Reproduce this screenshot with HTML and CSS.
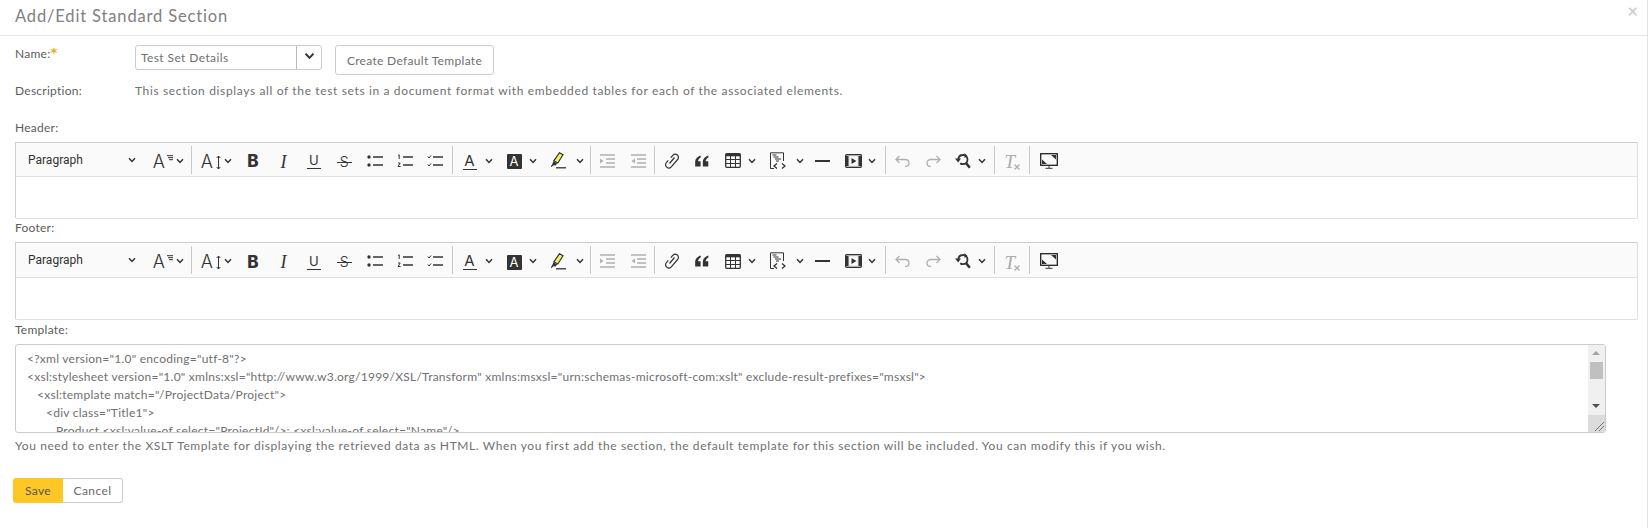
FILE: index.html
```html
<!DOCTYPE html>
<html lang="en">
<head>
<meta charset="utf-8">
<title>Add/Edit Standard Section</title>
<link rel="stylesheet" href="styles.css">
</head>
<body>
<svg class="defs" width="0" height="0" aria-hidden="true">
  <symbol id="i-chev" viewBox="0 0 8 6"><path class="st" d="M1 1.200 4 4.400 7 1.200"/></symbol>
  <symbol id="i-lines" viewBox="0 0 6 6"><path class="st1" d="M0 .7h6M1 2.700h5M2 4.700h4"/></symbol>
  <symbol id="i-updown" viewBox="0 0 5 15"><path class="st1" d="M2.500 1v13M.7 3 2.500 1 4.300 3M.7 12 2.500 14 4.300 12"/></symbol>
  <symbol id="i-ul" viewBox="0 0 16 16"><circle class="fl" cx="2" cy="4" r="1.700"/><circle class="fl" cx="2" cy="12" r="1.700"/><path class="st15" d="M6 4h10M6 12h10"/></symbol>
  <symbol id="i-ol" viewBox="0 0 16 16"><path class="st1" d="M1 2.500 2.200 1.800V6M1 10h2.200L1 13.500h2.600"/><path class="st15" d="M6 4h10M6 12h10"/></symbol>
  <symbol id="i-todo" viewBox="0 0 16 16"><path class="st1" d="M.8 3.500 2 5 4 2.500M.8 11.500 2 13 4 10.500"/><path class="st15" d="M6 4h10M6 12h10"/></symbol>
  <symbol id="i-mark" viewBox="0 0 16 17"><path d="M9.500 .7 13 2.800 7.800 11 3.800 8.800Z" fill="#f7ef6a" stroke="#333" stroke-width="1.200"/><path class="fl" d="M3.400 9.300 7.200 11.500 5.500 13.500 3.500 13.200 1.500 15 .7 14.500 2.200 12.300Z"/><path class="st15" d="M6 15.800h10"/></symbol>
  <symbol id="i-ind" viewBox="0 0 16 16"><path class="gr" d="M1 2h15M7 6h9M7 10h9M1 14h15"/><path class="grf" d="M1 5.500 4.500 8 1 10.500Z"/></symbol>
  <symbol id="i-out" viewBox="0 0 16 16"><path class="gr" d="M1 2h15M7 6h9M7 10h9M1 14h15"/><path class="grf" d="M5 5.500 1.500 8 5 10.500Z"/></symbol>
  <symbol id="i-link" viewBox="0 0 16 16"><path class="st12" d="M5.500 10.500 10.500 4.500M6.800 4.600 8.800 2.300C10 1 12 .9 13.300 2 14.700 3.200 14.800 5.200 13.600 6.500L7.300 13.800C6 15.200 4 15.300 2.700 14.100 1.300 12.900 1.200 10.900 2.400 9.600L4.300 7.400"/></symbol>
  <symbol id="i-quote" viewBox="0 0 15 12"><path class="fl" d="M5.800 0C3 1 .5 3 .2 6.400V12H6V6.200H3.200C3.400 4.400 4.600 3 6.400 2ZM14 0C11.200 1 8.700 3 8.400 6.400V12H14.200V6.200H11.400C11.600 4.400 12.800 3 14.600 2Z"/></symbol>
  <symbol id="i-table" viewBox="0 0 16 15"><rect x=".7" y=".7" width="14.600" height="13.600" rx="1" fill="none" stroke="#333" stroke-width="1.300"/><rect class="fl" x=".7" y=".7" width="14.600" height="2.600"/><path class="st1" d="M5.500 3v11M10.500 3v11M1 6.500h14M1 10.500h14"/></symbol>
  <symbol id="i-src" viewBox="0 0 17 18"><path class="st1" d="M5 16.500H1.500V.8h13V9"/><path class="st1" d="M3.500 3h4M4.500 5h5M6 7h6M7 9h3"/><path class="st15" d="M8 11.500 5 14l3 2.500M13 11.500l3 2.500-3 2.500"/></symbol>
  <symbol id="i-hr" viewBox="0 0 15 4"><path fill="#333" d="M0 1h15v2H0z"/></symbol>
  <symbol id="i-media" viewBox="0 0 17 14"><rect x=".7" y=".7" width="15.600" height="12.600" rx=".8" fill="#ddd" stroke="#333" stroke-width="1.300"/><path fill="#333" d="M0 2h3.500v10H0zM13.500 2H17v10h-3.500z"/><path fill="#fff" d="M4.500 2.500h8v9h-8z"/><path fill="#333" d="M6.500 4 11.500 7 6.500 10Z"/></symbol>
  <symbol id="i-undo" viewBox="0 0 15 12"><path class="gr" d="M4.500 1 1 4.500 4.500 8M1.500 4.500H10C12.500 4.500 14 6 14 8 14 10 12.500 11.500 10 11.500"/></symbol>
  <symbol id="i-redo" viewBox="0 0 15 12"><path class="gr" d="M10.500 1 14 4.500 10.500 8M13.500 4.500H5C2.500 4.500 1 6 1 8 1 10 2.500 11.500 5 11.500"/></symbol>
  <symbol id="i-find" viewBox="0 0 16 16"><path class="st18" d="M3.200 6.500C3.500 3.800 5.500 2 8 2c2.700 0 4.500 2 4.500 4.500 0 2.800-2 4.700-4.500 4.700-1.200 0-2-.3-2.800-1"/><path class="fl" d="M0 5.500h6L3.200 9.500ZM9.500 0l3 3-3 2Z"/><path class="st25" d="M11 10l3.800 4.800"/></symbol>
  <symbol id="i-x" viewBox="0 0 6 6"><path class="gr" d="M.5.500 5.500 5.500M5.500.500.500 5.500"/></symbol>
  <symbol id="i-full" viewBox="0 0 18 16"><rect x=".7" y=".7" width="16.600" height="11.600" fill="none" stroke="#222" stroke-width="1.300"/><path class="fl" d="M2 6.500V11H7ZM16 6.500V2H11Z"/><path class="st1" d="M9 12.500V15M5.500 15.300h7"/></symbol>
</svg>

<main class="modal">
  <header class="modal-head">
    <h1 class="modal-title">Add/Edit Standard Section</h1>
    <span class="modal-close">×</span>
  </header>
  <form class="form">
    <div class="row row-name">
      <span class="label">Name:<b class="req">*</b></span>
      <div class="combo"><span class="combo-text">Test Set Details</span><span class="combo-btn"><svg class="chev-lg"><use href="#i-chev"/></svg></span></div>
      <span class="btn-default">Create Default Template</span>
    </div>
    <div class="row row-desc">
      <span class="label">Description:</span>
      <span class="text">This section displays all of the test sets in a document format with embedded tables for each of the associated elements.</span>
    </div>

    <div class="label label-header">Header:</div>
    <div class="editor">
      <div class="toolbar">
        <span class="tb-para">Paragraph<svg class="chev"><use href="#i-chev"/></svg></span>
        <span class="dd"><span class="g g-a">A<svg class="g-lines"><use href="#i-lines"/></svg></span><svg class="chev"><use href="#i-chev"/></svg></span>
        <i class="sep"></i>
        <span class="dd"><span class="g g-a">A<svg class="g-updown"><use href="#i-updown"/></svg></span><svg class="chev"><use href="#i-chev"/></svg></span>
        <span class="bt"><span class="g g-b">B</span></span>
        <span class="bt"><span class="g g-i">I</span></span>
        <span class="bt"><span class="g g-u">U</span></span>
        <span class="bt"><span class="g g-s">S</span></span>
        <span class="bt"><svg class="ic16"><use href="#i-ul"/></svg></span>
        <span class="bt"><svg class="ic16"><use href="#i-ol"/></svg></span>
        <span class="bt"><svg class="ic16"><use href="#i-todo"/></svg></span>
        <i class="sep"></i>
        <span class="dd"><span class="g g-color">A</span><svg class="chev"><use href="#i-chev"/></svg></span>
        <span class="dd"><span class="g g-bg">A</span><svg class="chev"><use href="#i-chev"/></svg></span>
        <span class="dd dd-wide"><svg class="ic-mark"><use href="#i-mark"/></svg><svg class="chev"><use href="#i-chev"/></svg></span>
        <i class="sep"></i>
        <span class="bt"><svg class="ic16"><use href="#i-ind"/></svg></span>
        <span class="bt"><svg class="ic16"><use href="#i-out"/></svg></span>
        <i class="sep"></i>
        <span class="bt"><svg class="ic16"><use href="#i-link"/></svg></span>
        <span class="bt"><svg class="ic-quote"><use href="#i-quote"/></svg></span>
        <span class="dd"><svg class="ic-table"><use href="#i-table"/></svg><svg class="chev"><use href="#i-chev"/></svg></span>
        <span class="dd dd-wider"><svg class="ic-src"><use href="#i-src"/></svg><svg class="chev"><use href="#i-chev"/></svg></span>
        <span class="bt"><svg class="ic-hr"><use href="#i-hr"/></svg></span>
        <span class="dd dd-media"><svg class="ic-media"><use href="#i-media"/></svg><svg class="chev"><use href="#i-chev"/></svg></span>
        <i class="sep"></i>
        <span class="bt"><svg class="ic-undo"><use href="#i-undo"/></svg></span>
        <span class="bt"><svg class="ic-undo"><use href="#i-redo"/></svg></span>
        <span class="dd"><svg class="ic16"><use href="#i-find"/></svg><svg class="chev"><use href="#i-chev"/></svg></span>
        <i class="sep"></i>
        <span class="bt bt-tx"><span class="g g-t">T<svg class="g-x"><use href="#i-x"/></svg></span></span>
        <i class="sep"></i>
        <span class="bt bt-full"><svg class="ic-full"><use href="#i-full"/></svg></span>
      </div>
      <div class="editable"></div>
    </div>

    <div class="label label-footer">Footer:</div>
    <div class="editor">
      <div class="toolbar toolbar-tall">
        <span class="tb-para">Paragraph<svg class="chev"><use href="#i-chev"/></svg></span>
        <span class="dd"><span class="g g-a">A<svg class="g-lines"><use href="#i-lines"/></svg></span><svg class="chev"><use href="#i-chev"/></svg></span>
        <i class="sep"></i>
        <span class="dd"><span class="g g-a">A<svg class="g-updown"><use href="#i-updown"/></svg></span><svg class="chev"><use href="#i-chev"/></svg></span>
        <span class="bt"><span class="g g-b">B</span></span>
        <span class="bt"><span class="g g-i">I</span></span>
        <span class="bt"><span class="g g-u">U</span></span>
        <span class="bt"><span class="g g-s">S</span></span>
        <span class="bt"><svg class="ic16"><use href="#i-ul"/></svg></span>
        <span class="bt"><svg class="ic16"><use href="#i-ol"/></svg></span>
        <span class="bt"><svg class="ic16"><use href="#i-todo"/></svg></span>
        <i class="sep"></i>
        <span class="dd"><span class="g g-color">A</span><svg class="chev"><use href="#i-chev"/></svg></span>
        <span class="dd"><span class="g g-bg">A</span><svg class="chev"><use href="#i-chev"/></svg></span>
        <span class="dd dd-wide"><svg class="ic-mark"><use href="#i-mark"/></svg><svg class="chev"><use href="#i-chev"/></svg></span>
        <i class="sep"></i>
        <span class="bt"><svg class="ic16"><use href="#i-ind"/></svg></span>
        <span class="bt"><svg class="ic16"><use href="#i-out"/></svg></span>
        <i class="sep"></i>
        <span class="bt"><svg class="ic16"><use href="#i-link"/></svg></span>
        <span class="bt"><svg class="ic-quote"><use href="#i-quote"/></svg></span>
        <span class="dd"><svg class="ic-table"><use href="#i-table"/></svg><svg class="chev"><use href="#i-chev"/></svg></span>
        <span class="dd dd-wider"><svg class="ic-src"><use href="#i-src"/></svg><svg class="chev"><use href="#i-chev"/></svg></span>
        <span class="bt"><svg class="ic-hr"><use href="#i-hr"/></svg></span>
        <span class="dd dd-media"><svg class="ic-media"><use href="#i-media"/></svg><svg class="chev"><use href="#i-chev"/></svg></span>
        <i class="sep"></i>
        <span class="bt"><svg class="ic-undo"><use href="#i-undo"/></svg></span>
        <span class="bt"><svg class="ic-undo"><use href="#i-redo"/></svg></span>
        <span class="dd"><svg class="ic16"><use href="#i-find"/></svg><svg class="chev"><use href="#i-chev"/></svg></span>
        <i class="sep"></i>
        <span class="bt bt-tx"><span class="g g-t">T<svg class="g-x"><use href="#i-x"/></svg></span></span>
        <i class="sep"></i>
        <span class="bt bt-full"><svg class="ic-full"><use href="#i-full"/></svg></span>
      </div>
      <div class="editable"></div>
    </div>

    <div class="label label-template">Template:</div>
    <div class="code">
      <div class="code-lines">
        <div class="code-line">&lt;?xml version="1.0" encoding="utf-8"?&gt;</div>
        <div class="code-line">&lt;xsl:stylesheet version="1.0" xmlns:xsl="http://www.w3.org/1999/XSL/Transform" xmlns:msxsl="urn:schemas-microsoft-com:xslt" exclude-result-prefixes="msxsl"&gt;</div>
        <div class="code-line lvl1">&lt;xsl:template match="/ProjectData/Project"&gt;</div>
        <div class="code-line lvl2">&lt;div class="Title1"&gt;</div>
        <div class="code-line lvl3">Product &lt;xsl:value-of select="ProjectId"/&gt;: &lt;xsl:value-of select="Name"/&gt;</div>
      </div>
      <div class="scroll">
        <span class="arrow-up"></span>
        <span class="thumb"></span>
        <span class="arrow-down"></span>
        <span class="resizer"><svg class="grip" viewBox="0 0 9 9"><path d="M0 9 9 0M4 9 9 4" stroke="#777" fill="none"/></svg></span>
      </div>
    </div>
    <p class="help">You need to enter the XSLT Template for displaying the retrieved data as HTML. When you first add the section, the default template for this section will be included. You can modify this if you wish.</p>
    <div class="actions">
      <span class="btn-save">Save</span><span class="btn-cancel">Cancel</span>
    </div>
  </form>
</main>
</body>
</html>
```
FILE: styles.css
```css
* { box-sizing: border-box; }
html, body { margin: 0; padding: 0; background: #fff; }
body { font-family: Lato, "Open Sans", sans-serif; font-size: 12px; color: #666; overflow: hidden; }
.defs { position: absolute; }
.modal { height: 528px; border-right: 1px solid #e4e4e4; }
.modal-head { height: 36px; border-bottom: 1px solid #e6e6e6; display: flex; justify-content: space-between; padding: 0 9px 0 15px; }
.modal-title { margin: 5px 0 0; font-size: 16.500px; line-height: 22px; font-weight: 400; color: #808080; letter-spacing: .85px; }
.modal-close { font-size: 18px; line-height: 22px; font-weight: 700; color: #cfcfcf; }
.form { padding: 0 9px 0 15px; }
.row { display: flex; }
.row-name { margin-top: 9px; height: 30px; }
.label { color: #5c5c5c; font-size: 12px; line-height: 18px; letter-spacing: .25px; }
.row .label { width: 120px; flex: none; }
.req { color: #f5a623; font-family: "DejaVu Sans", sans-serif; font-size: 13px; line-height: 10px; vertical-align: 1px; letter-spacing: 0; }
.combo { width: 187px; height: 25px; display: flex; border: 1px solid #ccc; border-radius: 3px; }
.combo-text { flex: 1; padding-left: 5px; line-height: 24px; letter-spacing: .4px; color: #707070; }
.combo-btn { width: 25px; border-left: 1px solid #bbb; display: flex; align-items: center; justify-content: center; }
.chev-lg { width: 11px; height: 8px; margin-bottom: 4px; }
.btn-default { width: 159px; height: 30px; margin-left: 13px; border: 1px solid #ccc; border-radius: 3px; text-align: center; line-height: 28px; padding-top: 1px; letter-spacing: .32px; color: #707070; }
.row-desc { margin-top: 7px; height: 18px; }
.text { line-height: 18px; letter-spacing: .64px; color: #707070; }
.label-header { margin-top: 19px; height: 23px; }
.label-footer { height: 23px; }
.label-template { margin-top: 1px; height: 23px; }
.editor { width: 1623px; border: 1px solid #cfcfcf; border-color: #cfcfcf #e0e0e0 #e0e0e0 #cfcfcf; border-radius: 0 0 2px 2px; }
.toolbar { height: 34px; padding-top: 2px; background: #fafafa; border-bottom: 1px solid #e0e0e0; display: flex; align-items: center; }
.toolbar-tall { height: 35px; }
.editable { height: 41px; background: #fff; }
.tb-para { width: 129.800px; display: flex; align-items: center; justify-content: space-between; padding: 0 9.800px 0 12px; font-family: Roboto, sans-serif; font-size: 12px; color: #333; height: 100%; margin-top: -2px; flex: none; }
.dd { width: 44px; flex: none; display: flex; align-items: center; height: 100%; padding-left: 7px; }
.dd .chev { margin-left: auto; margin-right: 6px; }
.dd-wide { width: 45.500px; }
.dd-wide .chev { margin-right: 4px; }
.dd-wider { width: 46px; }
.dd-wider .chev { margin-right: 4px; }
.dd-media { width: 45.500px; }
.dd-media .chev { margin-right: 7px; }
.bt { width: 30.400px; flex: none; display: flex; align-items: center; justify-content: center; height: 100%; }
.bt-tx { margin-left: 1px; }
.bt-full { margin-left: 2px; }
.sep { width: 1px; height: 28px; background: #c8c8c8; margin: -2px 1.500px 0; flex: none; }
.chev { width: 8px; height: 6px; flex: none; }
.g { display: inline-block; position: relative; font-family: Inter, sans-serif; font-style: normal; line-height: 1; color: #333; margin-top: 2px; }
.g-a { font-size: 18px; width: 18px; font-weight: 300; }
.g-lines { position: absolute; right: -2px; top: 2px; width: 6px; height: 6px; }
.g-updown { position: absolute; right: -2px; top: 2px; width: 5px; height: 15px; }
.g-b { font-size: 17px; font-weight: 800; }
.g-i { font-family: "Liberation Serif", serif; font-style: italic; font-size: 18px; }
.g-u { font-size: 13px; width: 14px; text-align: center; border-bottom: 1.300px solid #333; padding-bottom: 2px; line-height: 12px; }
.g-s { font-size: 14px; width: 15px; text-align: center; font-weight: 300; }
.g-s::after { content: ""; position: absolute; left: 0; right: 0; top: 7px; height: 1px; background: #333; }
.g-color { font-size: 15px; width: 14px; text-align: center; border-bottom: 1.500px solid #333; padding-bottom: 2px; line-height: 13px; margin-left: 1px; }
.g-bg { font-size: 13px; width: 15px; height: 15px; line-height: 15px; text-align: center; background: #333; color: #fff; border-radius: 1px; margin-left: 1px; }
.g-t { font-family: "Liberation Serif", serif; font-style: italic; font-size: 19px; width: 16px; color: #aaa; }
.g-x { position: absolute; right: 0; bottom: 1px; width: 6px; height: 6px; }
.ic16 { width: 16px; height: 16px; flex: none; }
.ic-mark { width: 16px; height: 17px; flex: none; }
.ic-quote { width: 14px; height: 12px; }
.ic-table { width: 16px; height: 15px; flex: none; }
.ic-src { width: 17px; height: 18px; flex: none; }
.ic-hr { width: 15px; height: 4px; }
.ic-media { width: 17px; height: 14px; flex: none; }
.ic-undo { width: 15px; height: 12px; }
.ic-full { width: 18px; height: 16px; }
.st { fill: none; stroke: #333; stroke-width: 1.500; }
.st1 { fill: none; stroke: #333; stroke-width: 1; }
.st12 { fill: none; stroke: #333; stroke-width: 1.200; }
.st15 { fill: none; stroke: #333; stroke-width: 1.300; }
.st18 { fill: none; stroke: #333; stroke-width: 1.800; }
.st25 { fill: none; stroke: #333; stroke-width: 2.500; }
.fl { fill: #333; }
.gr { fill: none; stroke: #b0b0b0; stroke-width: 1.300; }
.grf { fill: #b0b0b0; }
.code { width: 1591px; height: 89px; display: flex; border: 1px solid #ccc; border-radius: 3px; overflow: hidden; }
.code-lines { flex: 1; padding: 5px 11px 0; overflow: hidden; }
.code-line { height: 18px; line-height: 18px; white-space: nowrap; letter-spacing: .25px; color: #707070; }
.lvl1 { padding-left: 10px; }
.lvl2 { padding-left: 19px; }
.lvl3 { padding-left: 29px; }
.scroll { width: 17px; flex: none; background: #f0f0f0; position: relative; }
.arrow-up, .arrow-down { position: absolute; left: 4px; width: 0; height: 0; border-left: 4px solid transparent; border-right: 4px solid transparent; }
.arrow-up { top: 6px; border-bottom: 4px solid #a3a3a3; }
.arrow-down { top: 59px; border-top: 4px solid #505050; }
.thumb { position: absolute; left: 2px; top: 17px; width: 13px; height: 17px; background: #c0c0c0; }
.resizer { position: absolute; left: 0; bottom: 0; width: 17px; height: 17px; background: #dcdcdc; display: block; }
.grip { position: absolute; right: 1px; bottom: 1px; width: 9px; height: 9px; }
.help { margin: 4px 0 0; line-height: 18px; letter-spacing: .6px; color: #707070; }
.actions { display: flex; margin: 23px 0 0 -2px; }
.btn-save { width: 50px; height: 25px; background: #fdc726; border-radius: 3px 0 0 3px; text-align: center; line-height: 25px; color: #555; letter-spacing: .4px; }
.btn-cancel { width: 60px; height: 25px; border: 1px solid #ccc; border-left: 0; border-radius: 0 3px 3px 0; text-align: center; line-height: 23px; color: #6a6a6a; letter-spacing: .4px; }
```
